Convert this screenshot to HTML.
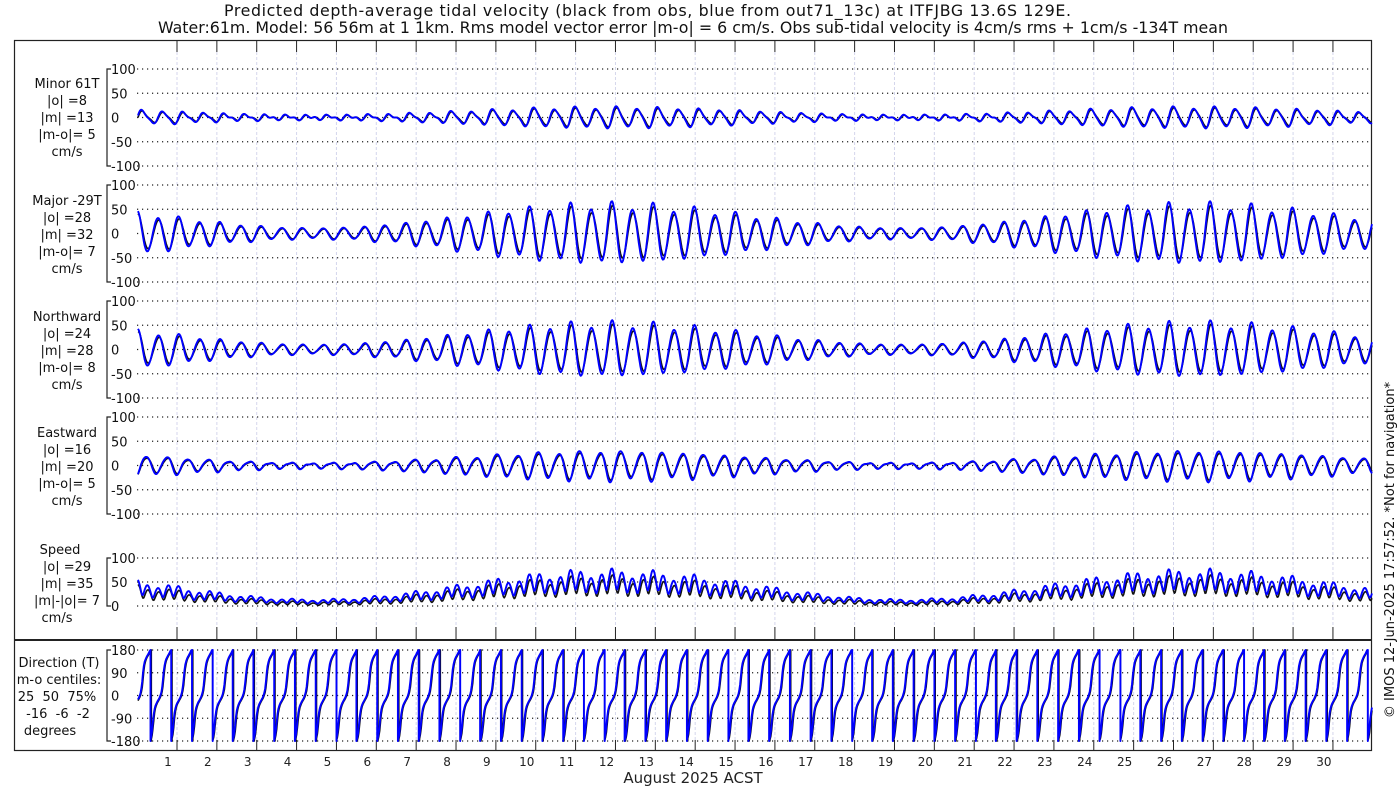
<!DOCTYPE html>
<html><head><meta charset="utf-8"><style>
html,body{margin:0;padding:0;background:#fff;width:1400px;height:800px;overflow:hidden}
svg{display:block;font-family:"DejaVu Sans","Liberation Sans",sans-serif}
</style></head><body>
<svg id="s" width="1400" height="800" viewBox="0 0 1400 800" xmlns="http://www.w3.org/2000/svg">
<rect width="1400" height="800" fill="#fff"/>
<text x="224" y="16" font-size="15.8" textLength="847" lengthAdjust="spacing" fill="#111">Predicted depth-average tidal velocity (black from obs, blue from out71_13c) at ITFJBG 13.6S 129E.</text>
<text x="158" y="33" font-size="15.8" textLength="1070" lengthAdjust="spacing" fill="#111">Water:61m. Model: 56 56m at 1 1km. Rms model vector error |m-o| = 6 cm/s. Obs sub-tidal velocity is 4cm/s rms + 1cm/s -134T mean</text>
<rect x="14.5" y="40.5" width="1357" height="710" fill="none" stroke="#222" stroke-width="1.2"/>
<line x1="14" y1="640" x2="1372" y2="640" stroke="#222" stroke-width="2"/>
<g id="g"></g>
<g font-size="13" fill="#111" text-anchor="middle">
<text x="67" y="88">Minor 61T</text><text x="67" y="105">|o| =8</text><text x="67" y="122">|m| =13</text><text x="67" y="139">|m-o|= 5</text><text x="67" y="156">cm/s</text>
<text x="67" y="205">Major -29T</text><text x="67" y="222">|o| =28</text><text x="67" y="239">|m| =32</text><text x="67" y="256">|m-o|= 7</text><text x="67" y="273">cm/s</text>
<text x="67" y="321">Northward</text><text x="67" y="338">|o| =24</text><text x="67" y="355">|m| =28</text><text x="67" y="372">|m-o|= 8</text><text x="67" y="389">cm/s</text>
<text x="67" y="437">Eastward</text><text x="67" y="454">|o| =16</text><text x="67" y="471">|m| =20</text><text x="67" y="488">|m-o|= 5</text><text x="67" y="505">cm/s</text>
<text x="60" y="554">Speed</text><text x="67" y="571">|o| =29</text><text x="67" y="588">|m| =35</text><text x="67" y="605" xml:space="preserve">|m|-|o|= 7</text><text x="57" y="622">cm/s</text>
<text x="59" y="667">Direction (T)</text><text x="59" y="684">m-o centiles:</text><text x="57" y="701" xml:space="preserve">25  50  75%</text><text x="58" y="718" xml:space="preserve">-16  -6  -2</text><text x="50" y="735">degrees</text>
</g>
<text x="693" y="783" font-size="15" text-anchor="middle" fill="#222">August 2025 ACST</text>
<text transform="translate(1394,550) rotate(-90)" font-size="13" text-anchor="middle" fill="#111">© IMOS 12-Jun-2025 17:57:52. *Not for navigation*</text>
</svg>
<script>
(function(){
var NS="http://www.w3.org/2000/svg",g=document.getElementById("g");
function el(n,a,t){var e=document.createElementNS(NS,n);for(var k in a)e.setAttribute(k,a[k]);if(t!==undefined)e.textContent=t;g.appendChild(e);return e;}
var X0=138,DX=39.86,XR=1372;
function xd(t){return X0+t*DX;}
for(var d=1;d<=30;d++){
 var x=177+DX*(d-1);
 el("line",{x1:x,y1:52,x2:x,y2:627,stroke:"#d4d6ec","stroke-width":1,"stroke-dasharray":"3,2"});
 el("line",{x1:x,y1:652,x2:x,y2:740,stroke:"#d4d6ec","stroke-width":1,"stroke-dasharray":"3,2"});
 el("line",{x1:x,y1:40,x2:x,y2:52,stroke:"#222","stroke-width":1});
 el("line",{x1:x,y1:627,x2:x,y2:640,stroke:"#222","stroke-width":1});
 el("line",{x1:x,y1:740,x2:x,y2:751,stroke:"#222","stroke-width":1});
 el("text",{x:168+DX*(d-1),y:766,"font-size":12,"text-anchor":"middle",fill:"#222"},String(d));
}
var P=[
 {t:69,b:166,mn:-100,mx:100,k:[100,50,0,-50,-100]},
 {t:185,b:282,mn:-100,mx:100,k:[100,50,0,-50,-100]},
 {t:301,b:398,mn:-100,mx:100,k:[100,50,0,-50,-100]},
 {t:417,b:514,mn:-100,mx:100,k:[100,50,0,-50,-100]},
 {t:558,b:606,mn:0,mx:100,k:[100,50,0]},
 {t:650,b:741,mn:-180,mx:180,k:[180,90,0,-90,-180]}];
P.forEach(function(p){
 p.y=function(v){return p.b-(v-p.mn)/(p.mx-p.mn)*(p.b-p.t);};
 el("path",{d:"M111,"+p.t+"H107V"+p.b+"H111",fill:"none",stroke:"#222","stroke-width":1.2});
 p.k.forEach(function(v){var y=p.y(v);
  el("line",{x1:137,y1:y,x2:XR,y2:y,stroke:"#222","stroke-width":1.2,"stroke-dasharray":"1.2,3.8"});
  el("text",{x:111,y:y+5,"font-size":13,fill:"#111"},String(v));});
});
var N=31*24*2,series={o:[],m:[]};
function env(t){return 0.55+0.45*Math.cos(2*Math.PI*(t-11.8)/14.77);}
["o","m"].forEach(function(s){
 var gain=s=="m"?1.1:0.95,ph=s=="m"?0.2:0;
 for(var i=0;i<=N;i++){
  var t=i/48,e=env(t);
  var w=2*Math.PI*t/0.5175+ph;
  var di=0.15*Math.cos(2*Math.PI*t/1.0+0.5);
  var A=gain*(48*e+5)*(1+di);
  var ma=A*Math.cos(w);
  var mi=A*0.38*Math.sin(w)+gain*3*Math.sin(2*w);
  var N_=ma*0.9+mi*0.2;
  var E_=-ma*0.45+mi*0.6;
  var sp=Math.sqrt(ma*ma+(0.5*A)*(0.5*A))*1.05+(s=="o"?-3:0);
  var dir=Math.atan2(0.4*Math.sin(w),Math.cos(w))*180/Math.PI-20;
  if(dir<-180)dir+=360;
  series[s].push([t,mi*0.9,ma,N_,E_,sp,dir]);
 }
});
function draw(s,col,wd){
 for(var j=0;j<6;j++){
  var p=P[j],d="",prev=null;
  series[s].forEach(function(r,i){
   var x=xd(r[0]);if(x>XR)return;
   var v=r[j+1];
   if(j==5&&prev!==null&&Math.abs(v-prev)>200){d+="L"+x.toFixed(1)+","+p.y(prev>0?180:-180).toFixed(1)+"L"+x.toFixed(1)+","+p.y(v>0?180:-180).toFixed(1);}
   d+=(i?"L":"M")+x.toFixed(1)+","+p.y(v).toFixed(1);prev=v;});
  el("path",{d:d,fill:"none",stroke:col,"stroke-width":wd,"stroke-linejoin":"round"});
 }
}
draw("o","#111",1.6);draw("m","#0000ff",1.9);
})();
</script>
</body></html>
